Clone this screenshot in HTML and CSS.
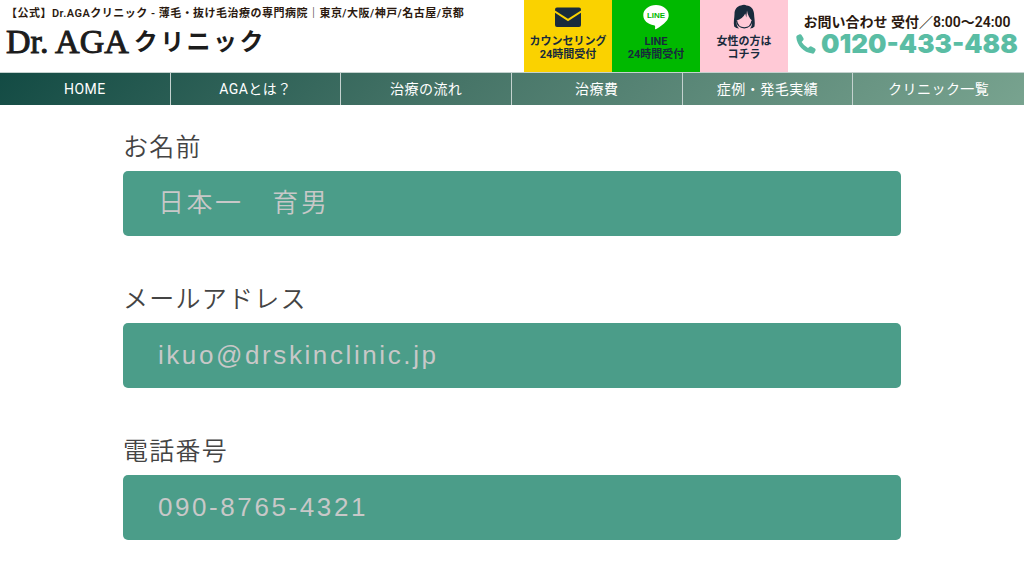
FILE: index.html
```html
<!DOCTYPE html>
<html lang="ja">
<head>
  <meta charset="UTF-8">
  <meta name="viewport" content="width=device-width, initial-scale=1.0">
  <title>Dr.AGAクリニック</title>
  <link rel="stylesheet" href="styles.css">
</head>
<body>
  <header class="header">
    <div class="header-brand">
      <h1 class="header-title">【公式】Dr.AGAクリニック - 薄毛・抜け毛治療の専門病院｜東京/大阪/神戸/名古屋/京都</h1>
      <a href="#" class="logo"><span class="logo-en">Dr. AGA</span><span class="logo-ja">クリニック</span></a>
    </div>

    <div class="header-links">
      <a href="#" class="header-btn counseling">
        <svg class="header-icon" viewBox="0 0 28 26" aria-hidden="true">
          <path fill="#182b3c" d="M1 6.500V5.500Q1 3.500 3 3.500H25Q27 3.500 27 5.500V6.500L14 14.800Z"/>
          <path fill="#182b3c" d="M1 8.800L14 17.300L27 8.800V21Q27 23 25 23H3Q1 23 1 21Z"/>
        </svg>
        <span>カウンセリング<br>24時間受付</span>
      </a>
      <a href="#" class="header-btn line">
        <svg class="header-icon" viewBox="0 0 28 26" aria-hidden="true">
          <path fill="#fff" d="M14 1C7 1 1.300 5.300 1.300 11.200C1.300 16.600 6 20.300 11.800 21.200C13.400 21.500 13.300 22.300 13 24.600C13 25.300 13.400 25.500 14.200 25C17.500 23.200 21.700 20.200 24.200 17.300C25.900 15.400 26.700 13.300 26.700 11.200C26.700 5.300 21 1 14 1Z"/>
          <text class="line-mark" x="14" y="14" text-anchor="middle">LINE</text>
        </svg>
        <span>LINE<br>24時間受付</span>
      </a>
      <a href="#" class="header-btn women">
        <svg class="header-icon" viewBox="0 0 28 26" aria-hidden="true">
          <path fill="#182b3c" d="M11 1.500C13 0.600 15 0.600 16.500 1.400C21 1.500 23.500 5 24 9.500C24.200 14 25.300 18 24.500 22.500Q23 24.500 20 24.500C21.800 22.500 22.300 20 22 16.500C19.500 14.500 17.500 10.500 17 6.500L16.300 13.500L15.300 9.500C13.500 13 10.500 15.500 6.500 16.500C6.200 20 7 22.500 9 24.500Q6 24.500 4.200 22.500C3.200 18 4.500 14 4.500 10C4.500 5.500 7 2 11 1.500Z"/>
          <path fill="none" stroke="#182b3c" stroke-width="1.300" d="M6.500 16.500Q7.500 23.800 14.300 23.800Q21 23.800 22 16.500"/>
        </svg>
        <span>女性の方は<br>コチラ</span>
      </a>
    </div>

    <div class="header-tel">
      <p class="tel-hours">お問い合わせ 受付／8:00〜24:00</p>
      <a href="tel:0120-433-488" class="tel-number">
        <svg class="tel-icon" viewBox="0 0 20 20" aria-hidden="true">
          <path fill="#5abda4" d="M1.500 1.200L3.700 0.300Q5 0 5.700 1.200L7.500 4.300Q8 5.500 7 6.500L5.600 8Q8 11.800 12 14L13.500 12.700Q14.500 12 15.500 12.500L19 14.500Q20 15.300 19.500 16.500L18.300 18.800Q17.700 19.800 16.300 19.600C7.500 18.500 1 11.500 0.300 3.300Q0.200 1.900 1.500 1.200Z"/>
        </svg>
        <span>0120-433-488</span>
      </a>
    </div>
  </header>

  <nav class="nav">
    <a href="#">HOME</a>
    <a href="#">AGAとは？</a>
    <a href="#">治療の流れ</a>
    <a href="#">治療費</a>
    <a href="#">症例・発毛実績</a>
    <a href="#">クリニック一覧</a>
  </nav>

  <main>
    <form class="form">
      <div class="form-group">
        <label for="name">お名前</label>
        <input type="text" id="name" placeholder="日本一　育男">
      </div>
      <div class="form-group">
        <label for="email">メールアドレス</label>
        <input type="email" id="email" placeholder="ikuo@drskinclinic.jp">
      </div>
      <div class="form-group">
        <label for="tel">電話番号</label>
        <input type="tel" id="tel" placeholder="090-8765-4321">
      </div>
    </form>
  </main>
</body>
</html>
```
FILE: styles.css
```css
* {
  box-sizing: border-box;
}

body {
  margin: 0;
  background: #fff;
  color: #2b1a10;
  font-family: Roboto, "Noto Sans CJK JP", sans-serif;
  letter-spacing: 0.03em;
}

a {
  color: inherit;
  text-decoration: none;
}

/* header */
.header {
  display: flex;
  height: 72px;
}

.header-brand {
  flex: 1;
  padding: 6px 0 0 6px;
  white-space: nowrap;
}

.header-title {
  margin: 0;
  font-size: 11px;
  line-height: 16px;
  font-weight: 600;
}

.logo {
  display: flex;
  align-items: center;
  gap: 5px;
  line-height: 40px;
  color: #1c1c1c;
}

.logo-en {
  font-family: "Liberation Serif", serif;
  font-size: 34px;
  letter-spacing: 0;
  -webkit-text-stroke: 1px #1c1c1c;
}

.logo-ja {
  font-size: 24px;
  font-weight: 700;
  letter-spacing: 0.1em;
}

.header-links {
  display: flex;
}

.header-btn {
  display: flex;
  flex-direction: column;
  align-items: center;
  gap: 5px;
  width: 88px;
  padding-top: 4px;
  font-size: 11px;
  line-height: 13px;
  font-weight: 700;
  letter-spacing: 0;
  text-align: center;
  color: #182b3c;
}

.header-icon {
  width: 28px;
  height: 26px;
}

.line-mark {
  fill: #00b900;
  font-family: "Liberation Sans", sans-serif;
  font-size: 8px;
  font-weight: 700;
}

.counseling {
  background: #fad200;
}

.line {
  background: #00b900;
}

.women {
  background: #ffc9d6;
}

.header-tel {
  width: 236px;
  padding: 14px 6px 0 8px;
  text-align: center;
  white-space: nowrap;
}

.tel-hours {
  margin: 0;
  font-size: 14px;
  line-height: 16px;
  font-weight: 600;
  letter-spacing: 0;
}

.tel-number {
  display: flex;
  align-items: center;
  gap: 5px;
  font-family: Inter, sans-serif;
  font-size: 26px;
  line-height: 28px;
  font-weight: 900;
  letter-spacing: 0;
  color: #5abda4;
}

.tel-icon {
  flex-shrink: 0;
  width: 20px;
  height: 20px;
}

/* global nav */
.nav {
  display: grid;
  grid-template-columns: repeat(6, 1fr);
  border-top: 1px solid #c4d2cf;
  background: linear-gradient(135deg, #134b44, #477568 45%, #78a38f);
}

.nav a {
  border-right: 1px solid #c4d2cf;
  font-size: 14px;
  line-height: 32px;
  text-align: center;
  color: #fff;
}

.nav a:last-child {
  border-right: 0;
}

/* contact form */
.form {
  display: flex;
  flex-direction: column;
  gap: 45px;
  width: 76%;
  margin: 0 auto;
  padding: 24px 0;
}

.form-group label {
  display: block;
  margin-bottom: 4px;
  font-size: 25px;
  line-height: 38px;
  font-weight: 350;
  letter-spacing: 0.05em;
  color: #444;
}

.form-group input {
  display: block;
  width: 100%;
  height: 65px;
  padding: 0 35px;
  border: 0;
  border-radius: 5px;
  background: #4b9d89;
  color: #fff;
  font-family: "Liberation Sans", "Noto Sans CJK JP", sans-serif;
  font-size: 26px;
  font-weight: 350;
  letter-spacing: 0.1em;
}

.form-group input::placeholder {
  color: #c8c8c8;
}
```
